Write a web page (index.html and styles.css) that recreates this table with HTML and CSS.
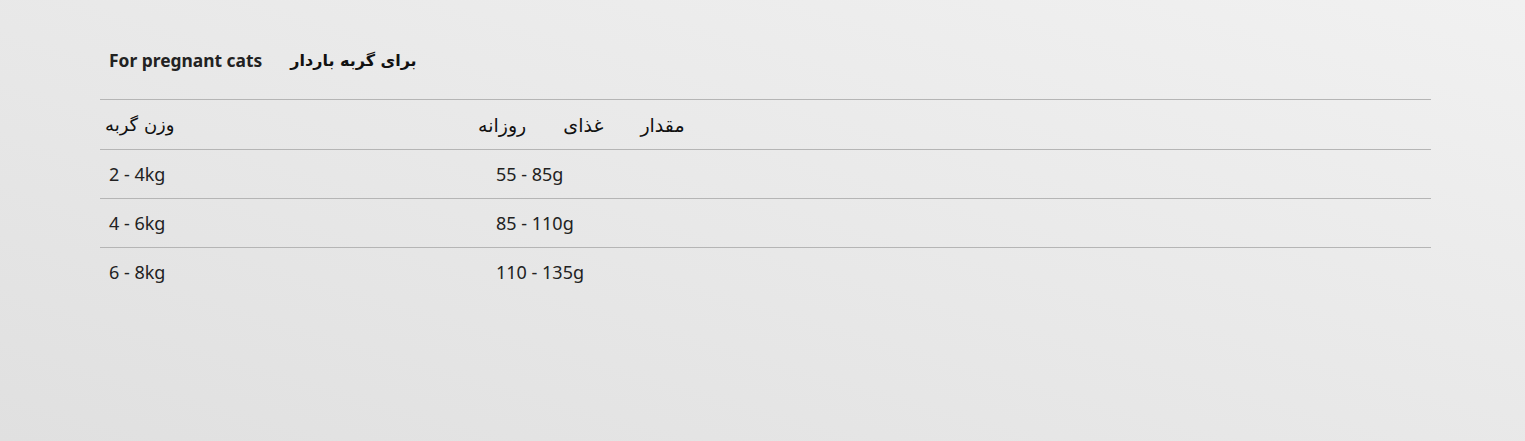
FILE: index.html
```html
<!DOCTYPE html>
<html lang="fa">
<head>
<meta charset="utf-8">
<title>Feeding guide</title>
<link rel="stylesheet" href="styles.css">
</head>
<body>
<main class="page">
  <div class="title-row">
    <span class="title-en">For pregnant cats</span>
    <span class="title-fa" dir="rtl">برای گربه باردار</span>
  </div>
  <table class="feed-table">
    <thead>
      <tr>
        <th class="col-weight"><span dir="rtl">وزن گربه</span></th>
        <th class="col-amount"><span class="amount-head" dir="rtl">مقدار غذای روزانه</span></th>
      </tr>
    </thead>
    <tbody>
      <tr><td>2 - 4kg</td><td class="amount">55 - 85g</td></tr>
      <tr><td>4 - 6kg</td><td class="amount">85 - 110g</td></tr>
      <tr><td>6 - 8kg</td><td class="amount">110 - 135g</td></tr>
    </tbody>
  </table>
</main>
</body>
</html>
```

FILE: styles.css
```css
html, body {
  margin: 0;
  height: 100%;
}
body {
  background: linear-gradient(to top right, #e0e0e0, #f1f1f1);
  font-family: "Noto Sans", "DejaVu Sans", sans-serif;
  color: #222;
}
.page {
  padding: 44px 0 0 100px;
  width: 1331px;
}
.title-row {
  display: flex;
  align-items: center;
  gap: 28px;
  padding-left: 9px;
  height: 32px;
  margin-bottom: 23px;
}
.title-en {
  font-weight: 700;
  font-size: 17.4px;
}
.title-fa {
  font-family: "DejaVu Sans", sans-serif;
  font-weight: 700;
  font-size: 16px;
  color: #111;
}
.feed-table {
  width: 100%;
  border-collapse: collapse;
  border-top: 1px solid #b5b5b5;
}
.feed-table th,
.feed-table td {
  text-align: left;
  font-weight: 400;
  padding: 0 0 0 9px;
  height: 48px;
  border-bottom: 1px solid #b5b5b5;
  font-size: 18px;
}
.feed-table tbody tr:last-child td {
  border-bottom: none;
}
.feed-table th {
  font-family: "DejaVu Sans", sans-serif;
  font-size: 18px;
  color: #111;
  padding-left: 5px;
  height: 49px;
}
.col-weight {
  width: 382px;
}
.amount-head {
  display: inline-block;
  word-spacing: 31px;
  font-size: 19px;
  margin-left: -14px;
}
.amount {
  padding-left: 7px;
}
```
